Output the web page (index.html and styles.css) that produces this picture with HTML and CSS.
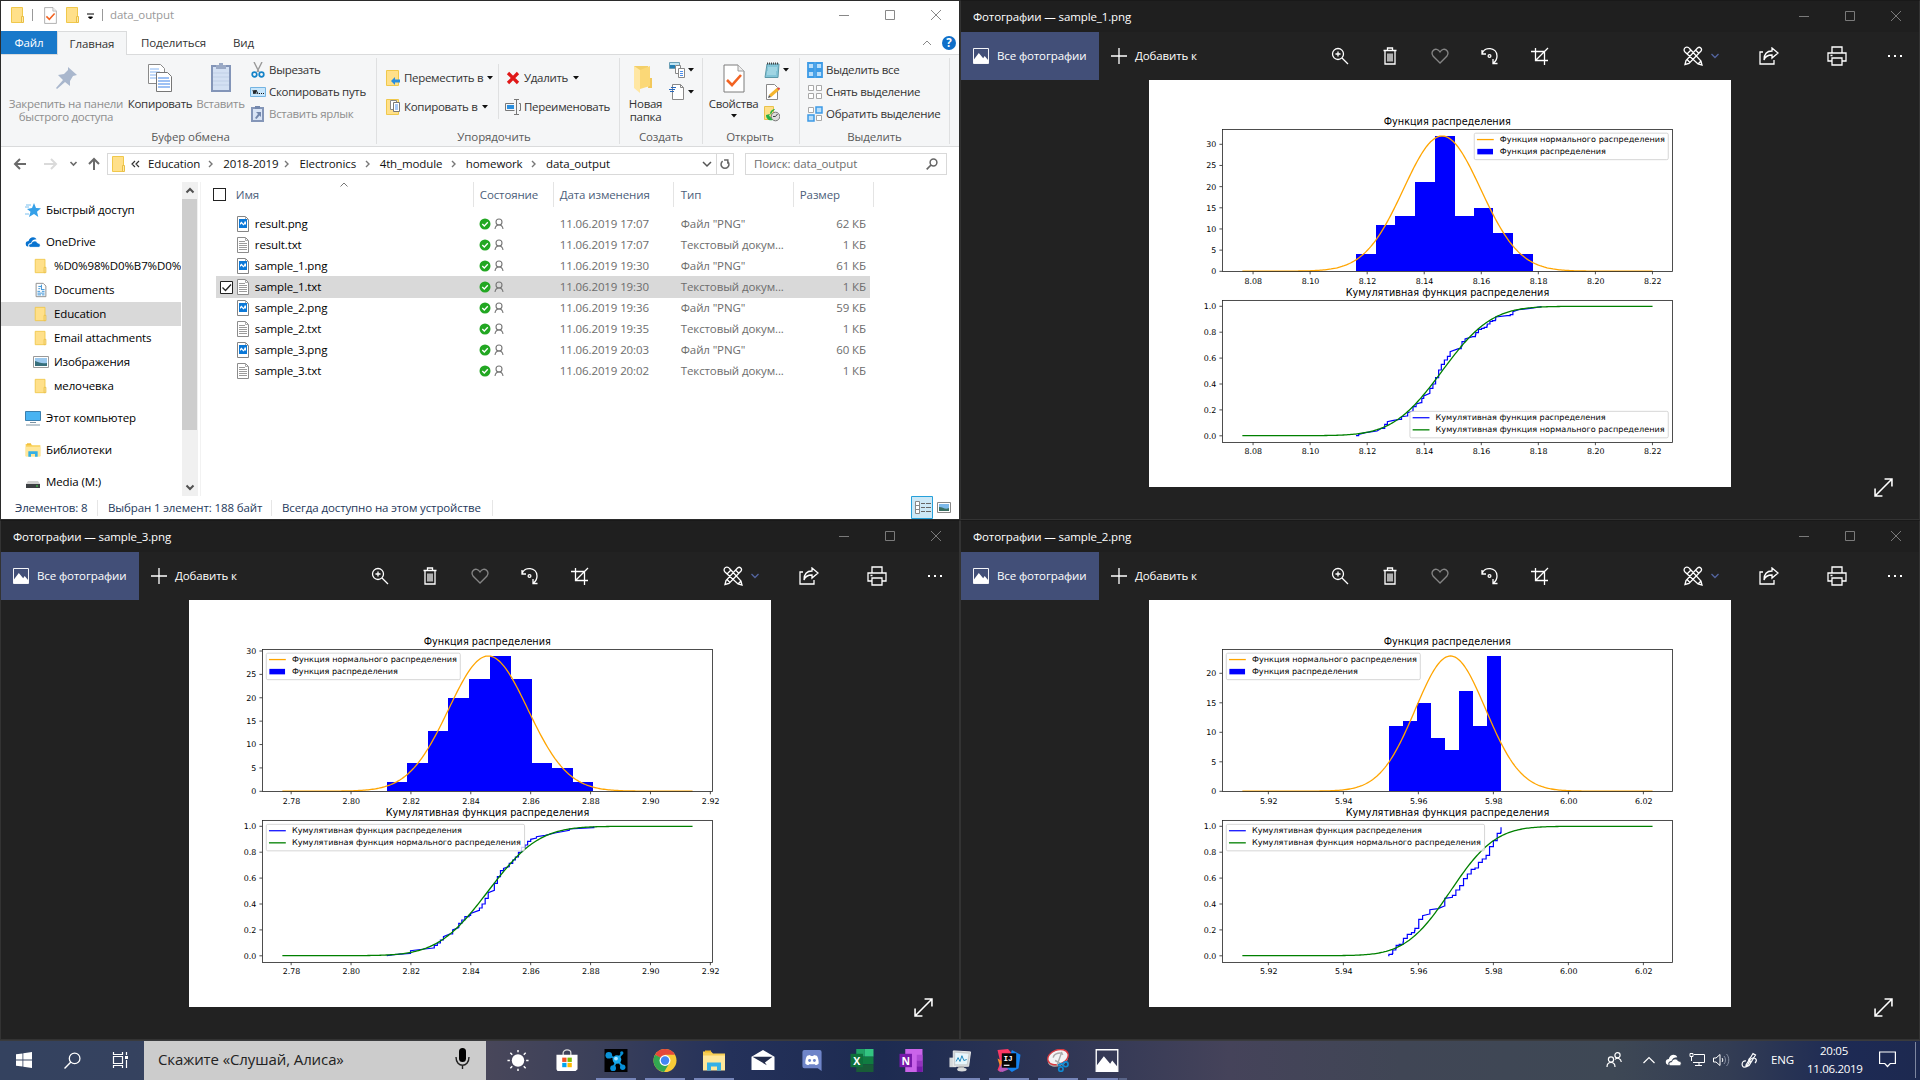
FILE: index.html
```html
<!DOCTYPE html>
<html lang="ru">
<head>
<meta charset="utf-8">
<title>data_output</title>
<link rel="stylesheet" href="styles.css">
</head>
<body>
<svg class="sprite" aria-hidden="true">
  <symbol id="folder" viewBox="0 0 16 18"><path d="M1.5 1.5h11v15h-11z" fill="#ffe08a" stroke="#f0c84b"/><path d="M11.5 10.5h2v6h-2z" fill="#ffe9a6" stroke="#e9bf45"/></symbol>
  <symbol id="png" viewBox="0 0 14 18"><path d="M1.500 1.500h8l3 3v12h-11z" fill="#fff" stroke="#858585"/><path d="M9.500 1.500v3h3" fill="none" stroke="#aaa"/><path d="M3 4h8v9H3z" fill="#0b78d7"/><path d="M4 10V8l1.500-1.500L7.500 9 9 6l1 1v3L9 9l-1.500 1.500L5.500 8.500z" fill="#fff"/></symbol>
  <symbol id="txt" viewBox="0 0 14 18"><path d="M1.500 1.500h8l3 3v12h-11z" fill="#fff" stroke="#8c8c8c"/><path d="M9.500 1.500v3h3" fill="none" stroke="#aaa"/><path d="M3 5.500h6M3 7.500h8M3 9.500h8M3 11.500h8M3 13.500h8" stroke="#9b9b9b"/></symbol>
  <symbol id="doc" viewBox="0 0 14 18"><path d="M1.500 1.500h8l3 3v12h-11z" fill="#fff" stroke="#858585"/><path d="M4 7.500h2M4 5h3M7.500 3v5M7 8.500h4M3 10.500h3M3 12.500h8M3 14.500h4M8 10.500h3M8 14.500h3" stroke="#2a8ad4"/></symbol>
  <symbol id="check-doc" viewBox="0 0 22 29"><path d="M1 1h14l6 6v21H1z" fill="#fff" stroke="#7d7d7d"/><path d="M15 1v6h6" fill="#eee" stroke="#999"/><path d="M4 16l5 5 9-10" fill="none" stroke="#f26322" stroke-width="2.600"/></symbol>
  <symbol id="sync" viewBox="0 0 12 12"><circle cx="6" cy="6" r="5.500" fill="#22a722"/><path d="M3.300 6l2 2 3.500-3.700" stroke="#fff" fill="none" stroke-width="1.300"/></symbol>
  <symbol id="person" viewBox="0 0 10 12"><circle cx="5" cy="4" r="3" fill="none" stroke="#777" stroke-width="1.100"/><path d="M1 11c.3-2.500 1.500-4 4-4s3.700 1.500 4 4" fill="none" stroke="#777" stroke-width="1.100"/></symbol>
  <symbol id="caret" viewBox="0 0 6 4"><path d="M0 0h6L3 3.500z" fill="#111"/></symbol>
  <symbol id="crumb" viewBox="0 0 6 8"><path d="M1 1l3 3-3 3" fill="none" stroke="#777" stroke-width="1.400"/></symbol>
  <symbol id="min" viewBox="0 0 10 10"><path d="M0 5.500h10" stroke="currentColor"/></symbol>
  <symbol id="max" viewBox="0 0 10 10"><path d="M.5.500h9v9h-9z" fill="none" stroke="currentColor"/></symbol>
  <symbol id="close" viewBox="0 0 10 10"><path d="M0 0l10 10M10 0L0 10" stroke="currentColor"/></symbol>
  <symbol id="mountain" viewBox="0 0 22 22"><path d="M.7.700h20.600v20.600H.7z" fill="none" stroke="#fff" stroke-width="1.300"/><path d="M1 16l7-9 6 7 2-3 5 6v4H1z" fill="#fff"/></symbol>
  <symbol id="explorer" viewBox="0 0 24 22"><path d="M1 2h8l2 2h12v16H1z" fill="#f8cf57"/><path d="M1 6h22v15H1z" fill="#ffe79a"/><path d="M3 1h6v2H3z" fill="#f0b92a"/><path d="M5 13h14v8h-4v-4H9v4H5z" fill="#35b0e6"/></symbol>
  <symbol id="cloud" viewBox="0 0 18 12"><path d="M1 9c-1-3 2-4 3-4 1-5 7-6 9-2-3 0-5 1-6 4-3 0-4 2-3 4H3c-1 0-2-1-2-2z" fill="currentColor"/><path d="M6 12c-3-1-2-4 1-4 1-4 6-4 7-1 4 0 4 5 1 5z" fill="currentColor" stroke="var(--cut)" stroke-width=".8"/></symbol>
</svg>

<main class="desktop">
  <section class="explorer">
    <header class="ex-title">
      <svg class="i-folder"><use href="#folder"/></svg><i class="bar"></i>
      <svg class="i-qdoc"><use href="#check-doc"/></svg>
      <svg class="i-folder"><use href="#folder"/></svg>
      <svg class="i-qcaret" viewBox="0 0 8 8"><path d="M0 1h7M1.500 4h4L3.500 6z" stroke="#000" fill="#000"/></svg><i class="bar"></i>
      <span class="ex-name">data_output</span>
      <div class="controls"><svg><use href="#min"/></svg><svg><use href="#max"/></svg><svg><use href="#close"/></svg></div>
    </header>
    <nav class="tabs">
      <span class="tab tab-file">Файл</span><span class="tab tab-home">Главная</span><span class="tab tab-share">Поделиться</span><span class="tab tab-view">Вид</span>
      <svg class="i-collapse" viewBox="0 0 10 6"><path d="M1 5l4-4 4 4" fill="none" stroke="#888"/></svg>
      <span class="help">?</span>
    </nav>
    <div class="ribbon">
      <div class="group g-clip">
        <div class="tools">
          <div class="big big-pin off"><svg viewBox="0 0 32 32"><path d="M18 5l9 8-4 1-3 5 0 5-5-4-8 7-1-1 7-8-5-5 6-1 4-4z" fill="#a9b7cd"/></svg><span>Закрепить на панели<br>быстрого доступа</span></div>
          <div class="big big-copy"><svg viewBox="0 0 32 32"><path d="M4.500 2.500h12l4 4v15h-16z" fill="#fff" stroke="#8a8a8a"/><path d="M6 7h9M6 10h10M6 13h8M6 16h8" stroke="#85b4f2"/><path d="M12.500 10.500h11l4 4v15h-15z" fill="#fff" stroke="#777"/><path d="M14 16h11M14 19h12M14 22h12M14 25h12" stroke="#3f83ea" stroke-width="1.200"/></svg><span>Копировать</span></div>
          <div class="big big-paste off"><svg viewBox="0 0 32 32"><path d="M7 4h18v25H7z" fill="#d3e0f3" stroke="#8395b8" stroke-width="2"/><path d="M11 3h3V1h4v2h3v4H11z" fill="#9aa9c5"/><path d="M8 11h16M8 15h16M8 19h16M8 23h16" stroke="#c0cfe6"/></svg><span>Вставить</span></div>
          <div class="small-col">
            <div class="small"><svg viewBox="0 0 16 16"><path d="M4 0l5 10M12 0L7 10" stroke="#999" stroke-width="1.400"/><circle cx="4.500" cy="12.500" r="2.300" fill="none" stroke="#1583c8" stroke-width="1.700"/><circle cx="11.500" cy="12.500" r="2.300" fill="none" stroke="#1583c8" stroke-width="1.700"/></svg>Вырезать</div>
            <div class="small"><svg viewBox="0 0 16 16"><path d="M.5 3.500h15v9H.5z" fill="#c8e6fb" stroke="#74b4e2"/><path d="M3 6l1 4 1-4 1 4M6 6l2 4M9 9.500h1M11 9.500h1M13 9.500h1" stroke="#111" fill="none"/></svg>Скопировать путь</div>
            <div class="small off"><svg viewBox="0 0 16 16"><path d="M2 2h11v13H2z" fill="#d9e4f5" stroke="#8496b8" stroke-width="2"/><path d="M5 0h5v3H5zM6 6h5v5L9.500 9.500 6.500 13 5 12l3-4z" fill="#7488ad"/></svg>Вставить ярлык</div>
          </div>
        </div><div class="g-label">Буфер обмена</div>
      </div>
      <div class="group g-org">
        <div class="tools">
          <div class="mid-col mid-first">
            <div class="small"><svg viewBox="0 0 16 16"><path d="M.5.500h12v15H.5z" fill="#ffe08a" stroke="#f0c84b"/><path d="M5 11l4-4v2.500h5v3H9V15z" fill="#2b8fdf"/></svg>Переместить в<svg class="caret"><use href="#caret"/></svg></div>
            <div class="small"><svg viewBox="0 0 16 16"><path d="M.5.500h12v15H.5z" fill="#ffe08a" stroke="#f0c84b"/><path d="M4.500 1.500h6v9h-6z" fill="#fff" stroke="#888"/><path d="M7.500 3.500h6v9h-6z" fill="#fff" stroke="#777"/><path d="M9 6h3M9 8h3M9 10h3" stroke="#4d8eea"/></svg>Копировать в<svg class="caret"><use href="#caret"/></svg></div>
          </div>
          <div class="mid-col mid-second">
            <div class="small"><svg viewBox="0 0 16 16"><path d="M3 3l10 10M13 3L3 13" stroke="#e01818" stroke-width="3.200"/></svg>Удалить<svg class="caret"><use href="#caret"/></svg></div>
            <div class="small"><svg viewBox="0 0 16 16"><path d="M9 4.500H.5v7h9M14 4.500h1.500v7H14M9 .500h5M11.500.500v15M9 15.500h5" stroke="#777" fill="none"/><path d="M2 6h7v4H2z" fill="#2b8fdf"/></svg>Переименовать</div>
          </div>
        </div><div class="g-label">Упорядочить</div>
      </div>
      <div class="group g-new">
        <div class="tools">
          <div class="big big-new"><svg viewBox="2 0 32 32"><path d="M6 4h14v20H6z" fill="#f3cf68"/><path d="M21 16h3v10h-4z" fill="#f2c85c"/><path d="M6 4l6 4v23l-6-5z" fill="#ffe7a3"/><path d="M12 8l10-4v20l-10 3z" fill="#fbd877"/></svg><span>Новая<br>папка</span></div>
          <div class="small-col">
            <div class="small"><svg viewBox="0 0 16 16"><path d="M.5.500h10v6H.5z" fill="#bfe6f5" stroke="#6c9fb5"/><path d="M1 3h5v3H1z" fill="#237fb3"/><path d="M6.500 3.500h5v8h-5z" fill="#fff" stroke="#888"/><path d="M9.500 6.500h6v9h-6z" fill="#fff" stroke="#888"/><path d="M11 9.500h3M11 11.500h3M11 13.500h3" stroke="#4d8eea"/></svg><svg class="caret"><use href="#caret"/></svg></div>
            <div class="small"><svg viewBox="0 0 16 16"><path d="M3.500.500h8l3 3v12h-11z" fill="#fff" stroke="#888"/><path d="M11.500.500v3h3" fill="none" stroke="#888"/><path d="M2 3.500h5M0 5.500h6M1 7.500h4" stroke="#2969bd"/></svg><svg class="caret"><use href="#caret"/></svg></div>
          </div>
        </div><div class="g-label">Создать</div>
      </div>
      <div class="group g-open">
        <div class="tools">
          <div class="big big-prop"><svg viewBox="-5 -2 32 32"><use href="#check-doc" width="22" height="29"/></svg><span>Свойства</span><svg class="caret"><use href="#caret"/></svg></div>
          <div class="small-col">
            <div class="small"><svg viewBox="0 0 16 16"><path d="M3 2h12l-1 13.500H1z" fill="#83c5d8" stroke="#5d98a8"/><path d="M3 1.500h12" stroke="#444" stroke-width="2" stroke-dasharray="1 1"/><path d="M4 6h9M4 8h9M3 10h9M3 12h9" stroke="#bde5ee"/></svg><svg class="caret"><use href="#caret"/></svg></div>
            <div class="small"><svg viewBox="0 0 16 16"><path d="M2.500.500h8l3 3v12h-11z" fill="#fff" stroke="#888"/><path d="M6 12l8-7" stroke="#f4b52e" stroke-width="3"/><path d="M14 4l1.500 1.500" stroke="#d44" stroke-width="2"/><path d="M5 11l2 2-3 1z" fill="#555"/></svg></div>
            <div class="small"><svg viewBox="0 0 16 16"><path d="M.5.500h9v13h-9z" fill="#ffe08a" stroke="#e9c24b"/><circle cx="11.500" cy="10.500" r="4.300" fill="#ddd" stroke="#777"/><path d="M11.500 10.500l2-2.500M11.500 10.500H9" stroke="#444"/><path d="M2 9l4-1-1 2c2 0 2 3 4 4-4 1-7-1-7-5zM6 7c1-3 3-4 5-4-1 2-3 2-4 6z" fill="#27b044"/></svg></div>
          </div>
        </div><div class="g-label">Открыть</div>
      </div>
      <div class="group g-sel">
        <div class="small-col">
          <div class="small"><svg viewBox="0 0 16 16"><path d="M1 1h6v6H1zM9 1h6v6H9zM1 9h6v6H1zM9 9h6v6H9z" fill="#b9defa" stroke="#3d9be6" stroke-width="1.800"/></svg>Выделить все</div>
          <div class="small"><svg viewBox="0 0 16 16"><path d="M1.500 1.500h5v5h-5zM9.500 1.500h5v5h-5zM1.500 9.500h5v5h-5zM9.500 9.500h5v5h-5z" fill="#fff" stroke="#a8a8a8"/></svg>Снять выделение</div>
          <div class="small"><svg viewBox="0 0 16 16"><path d="M1.500 1.500h5v5h-5zM9.500 9.500h5v5h-5z" fill="#fff" stroke="#a8a8a8"/><path d="M9 1h6v6H9zM1 9h6v6H1z" fill="#b9defa" stroke="#3d9be6" stroke-width="1.500"/></svg>Обратить выделение</div>
        </div><div class="g-label">Выделить</div>
      </div>
    </div>
    <div class="address-row">
      <svg class="arrows" viewBox="0 0 106 22"><g fill="none" stroke="#6a6a6a" stroke-width="2"><path d="M25 11H14M19 6l-5 5 5 5"/><path d="M43 11h11M50 6l5 5-5 5" stroke="#dadada"/><path d="M69.500 9l3 3 3-3" stroke-width="1.600"/><path d="M93 17V6M88 11l5-5 5 5"/></g></svg>
      <div class="address">
        <svg class="i-folder"><use href="#folder"/></svg><svg class="guill" viewBox="0 0 9 8"><path d="M4 1L1 4l3 3M8 1L5 4l3 3" fill="none" stroke="#333" stroke-width="1.200"/></svg>
        <span class="crumb c1">Education</span><svg class="sep"><use href="#crumb"/></svg>
        <span class="crumb c2">2018-2019</span><svg class="sep"><use href="#crumb"/></svg>
        <span class="crumb c3">Electronics</span><svg class="sep"><use href="#crumb"/></svg>
        <span class="crumb c4">4th_module</span><svg class="sep"><use href="#crumb"/></svg>
        <span class="crumb c5">homework</span><svg class="sep"><use href="#crumb"/></svg>
        <span class="crumb c6">data_output</span>
        <svg class="drop" viewBox="0 0 10 8"><path d="M1 2l4 4 4-4" fill="none" stroke="#555" stroke-width="1.500"/></svg>
        <svg class="refresh" viewBox="0 0 17 20"><path d="M11 7a4.200 4.200 0 1 1-5 0M7.500 5.700h4v4" fill="none" stroke="#666" stroke-width="1.600"/></svg>
      </div>
      <div class="search">Поиск: data_output<svg viewBox="0 0 12 12"><circle cx="7.500" cy="4.500" r="3.400" fill="none" stroke="#666" stroke-width="1.500"/><path d="M5 7l-4.300 4.300" stroke="#666" stroke-width="1.700"/></svg></div>
    </div>
    <div class="ex-body">
      <aside class="tree">
        <div class="node"><svg viewBox="0 0 16 16"><path d="M9 1l2 5 5 .3-4 3.400 1.300 5.300L9 12l-5 3 1.500-5.300L2 7l5-1z" fill="#35a0e8"/><path d="M0 5h4M1 3h5M0 12h4" stroke="#7ac0ef"/></svg>Быстрый доступ</div>
        <div class="node top blue"><svg viewBox="0 -3 18 18"><use href="#cloud" width="18" height="12"/></svg>OneDrive</div>
        <div class="node sub"><svg><use href="#folder"/></svg>%D0%98%D0%B7%D0%</div>
        <div class="node sub"><svg><use href="#doc"/></svg>Documents</div>
        <div class="node sub picked"><svg><use href="#folder"/></svg>Education</div>
        <div class="node sub"><svg><use href="#folder"/></svg>Email attachments</div>
        <div class="node sub"><svg viewBox="0 0 16 16"><path d="M.5 2.500h15v11H.5z" fill="#fff" stroke="#999"/><path d="M2 4h12v8H2z" fill="#9cc9ee"/><path d="M2 7c4 1 6 3 12 2v3H2z" fill="#376f7b"/></svg>Изображения</div>
        <div class="node sub"><svg><use href="#folder"/></svg>мелочевка</div>
        <div class="node top"><svg viewBox="0 0 16 16"><path d="M.5 1.500h15v9H.5z" fill="#49b3f2" stroke="#3b7fae"/><path d="M5 12.500h6M1 15h14" stroke="#7d93a3"/></svg>Этот компьютер</div>
        <div class="node top"><svg><use href="#explorer"/></svg>Библиотеки</div>
        <div class="node top"><svg viewBox="0 0 16 16"><path d="M3 7h10l2 3H1z" fill="#d0d0d0"/><path d="M1 10h14v4H1z" fill="#3c3f42"/><path d="M11 12h2" stroke="#3fdc4b"/></svg>Media (M:)</div>
      </aside>
      <div class="scroll"><svg viewBox="0 0 16 17"><path d="M4.500 10.500L8 7l3.500 3.500" fill="none" stroke="#505050" stroke-width="2"/></svg><i></i><svg viewBox="0 0 16 17"><path d="M4.500 6.500L8 10l3.500-3.500" fill="none" stroke="#505050" stroke-width="2"/></svg></div>
      <div class="files">
        <div class="head"><i class="box"></i><span class="h-name">Имя</span><svg class="sort" viewBox="0 0 8 5"><path d="M.5 4.500L4 1l3.500 3.500" fill="none" stroke="#777"/></svg><span class="h-state">Состояние</span><span class="h-date">Дата изменения</span><span class="h-type">Тип</span><span class="h-size">Размер</span></div>
        <div class="row"><svg class="fi"><use href="#png"/></svg><span class="name">result.png</span><svg class="st"><use href="#sync"/></svg><svg class="pr"><use href="#person"/></svg><span class="date">11.06.2019 17:07</span><span class="type">Файл "PNG"</span><span class="size">62 КБ</span></div>
        <div class="row"><svg class="fi"><use href="#txt"/></svg><span class="name">result.txt</span><svg class="st"><use href="#sync"/></svg><svg class="pr"><use href="#person"/></svg><span class="date">11.06.2019 17:07</span><span class="type">Текстовый докум...</span><span class="size">1 КБ</span></div>
        <div class="row"><svg class="fi"><use href="#png"/></svg><span class="name">sample_1.png</span><svg class="st"><use href="#sync"/></svg><svg class="pr"><use href="#person"/></svg><span class="date">11.06.2019 19:30</span><span class="type">Файл "PNG"</span><span class="size">61 КБ</span></div>
        <div class="row chosen"><svg class="tick" viewBox="0 0 13 13"><path d="M.5.500h12v12H.5z" fill="#fff" stroke="#222"/><path d="M2.500 6.500l3 3 5.500-6" fill="none" stroke="#222" stroke-width="1.300"/></svg><svg class="fi"><use href="#txt"/></svg><span class="name">sample_1.txt</span><svg class="st"><use href="#sync"/></svg><svg class="pr"><use href="#person"/></svg><span class="date">11.06.2019 19:30</span><span class="type">Текстовый докум...</span><span class="size">1 КБ</span></div>
        <div class="row"><svg class="fi"><use href="#png"/></svg><span class="name">sample_2.png</span><svg class="st"><use href="#sync"/></svg><svg class="pr"><use href="#person"/></svg><span class="date">11.06.2019 19:36</span><span class="type">Файл "PNG"</span><span class="size">59 КБ</span></div>
        <div class="row"><svg class="fi"><use href="#txt"/></svg><span class="name">sample_2.txt</span><svg class="st"><use href="#sync"/></svg><svg class="pr"><use href="#person"/></svg><span class="date">11.06.2019 19:35</span><span class="type">Текстовый докум...</span><span class="size">1 КБ</span></div>
        <div class="row"><svg class="fi"><use href="#png"/></svg><span class="name">sample_3.png</span><svg class="st"><use href="#sync"/></svg><svg class="pr"><use href="#person"/></svg><span class="date">11.06.2019 20:03</span><span class="type">Файл "PNG"</span><span class="size">60 КБ</span></div>
        <div class="row"><svg class="fi"><use href="#txt"/></svg><span class="name">sample_3.txt</span><svg class="st"><use href="#sync"/></svg><svg class="pr"><use href="#person"/></svg><span class="date">11.06.2019 20:02</span><span class="type">Текстовый докум...</span><span class="size">1 КБ</span></div>
      </div>
    </div>
    <footer class="status">
      <span class="s1">Элементов: 8</span><span class="s2">Выбран 1 элемент: 188 байт</span><span class="s3">Всегда доступно на этом устройстве</span>
      <svg class="view-details" viewBox="0 0 22 23"><path d="M.5.500h21v22H.5z" fill="#cce8f6" stroke="#26a0da"/><path d="M4.500 5.500h4v12h-4zM4.500 9.500h4M4.500 13.500h4" fill="#fff" stroke="#888"/><path d="M10 7.500h4M15 7.500h5M10 11.500h4M15 11.500h5M10 15.500h4M15 15.500h5" stroke="#666"/></svg>
      <svg class="view-icons" viewBox="0 0 14 11"><path d="M.5.500h13v10H.5z" fill="#fff" stroke="#888"/><path d="M2 2h10v7H2z" fill="#7db9ea"/><path d="M2 5c4 0 6 3 10 1v3H2z" fill="#3a6f62"/></svg>
    </footer>
  </section>
  <section class="photos" data-sample="sample_1"></section>
  <section class="photos" data-sample="sample_3"></section>
  <section class="photos" data-sample="sample_2"></section>

  <footer class="taskbar">
    <div class="sys"><svg viewBox="0 0 16 16" width="16" height="16"><path d="M0 2.300l6.500-.9v6.200H0zM7.300 1.300L16 0v7.600H7.300zM0 8.400h6.500v6.200L0 13.700zM7.300 8.400H16V16l-8.700-1.300z" fill="#fff"/></svg></div>
    <div class="sys"><svg viewBox="0 0 16 16" width="17" height="17"><circle cx="10" cy="6" r="5" fill="none" stroke="#fff" stroke-width="1.200"/><path d="M6.500 9.500L.5 15.500" stroke="#fff" stroke-width="1.300"/></svg></div>
    <div class="sys"><svg viewBox="0 0 17 16" width="17" height="16"><path d="M1.500 4.500h9v7h-9zM1.500 0v2.500h9V0M1.500 16v-2.500h9V16M14.500 0v3M14.500 8v8" fill="none" stroke="#fff" stroke-width="1.200"/><path d="M13 4h3v3h-3z" fill="#fff"/></svg></div>
    <div class="alice">Скажите «Слушай, Алиса»<svg viewBox="0 0 15 22"><rect x="4" y="0" width="7" height="14" rx="3.500"/><path d="M1 9c0 11 13 11 13 0M7.500 17v4" fill="none" stroke="#222" stroke-width="1.400"/></svg></div>
    <div class="apps">
      <div class="app"><svg viewBox="0 0 24 24"><circle cx="12" cy="12" r="6.500" fill="#fff"/><path d="M12 1v2.500M12 20.500V23M1 12h2.500M20.500 12H23M4 4l2 2M18 18l2 2M4 20l2-2M18 6l2-2" stroke="#fff" stroke-width="1.500"/></svg></div>
      <div class="app"><svg viewBox="0 0 24 24"><path d="M8 7V4c0-4 8-4 8 0v3" fill="none" stroke="#ddd" stroke-width="1.300"/><path d="M1 6h22v15l-2 2H2l-1-2z" fill="#fff"/><path d="M7 9h4.500v4.500H7z" fill="#f25022"/><path d="M12.500 9H17v4.500h-4.500z" fill="#7fba00"/><path d="M7 14.500h4.500V19H7z" fill="#00a4ef"/><path d="M12.500 14.500H17V19h-4.500z" fill="#ffb900"/></svg></div>
      <div class="app run"><svg viewBox="0 0 24 24"><path d="M0 0h24v24H0z" fill="#000"/><path d="M5 7l8 4 6-7M13 11l7 9M13 11l-4 9" stroke="#0a94d8" stroke-width="2" fill="none"/><circle cx="13" cy="11" r="4.500" fill="#19a9ec"/><circle cx="4.500" cy="6.500" r="3.500" fill="#0b91d8"/><circle cx="9" cy="20" r="3" fill="#078fd7"/><circle cx="19" cy="19" r="2.800" fill="#078fd7"/><circle cx="18" cy="4" r="1.700" fill="#078fd7"/><circle cx="12" cy="10" r="2" fill="#aee5ff"/></svg></div>
      <div class="app run"><svg viewBox="0 0 24 24"><circle cx="12" cy="12" r="12" fill="#f7cb37"/><path d="M12 12L1.600 6A12 12 0 0 1 22.400 6H12z" fill="#e5483b"/><path d="M1.600 6A12 12 0 0 0 11 24l6-10z" fill="#32a851"/><circle cx="12" cy="12" r="5.700" fill="#fff"/><circle cx="12" cy="12" r="4.400" fill="#4285f4"/></svg></div>
      <div class="app run"><svg><use href="#explorer"/></svg></div>
      <div class="app"><svg viewBox="0 0 24 24"><path d="M0 8l12-7 12 7v14H0z" fill="#fff"/><path d="M1 8h21l-8 6 2 3z" fill="#232d4c"/></svg></div>
      <div class="app"><svg viewBox="0 0 24 24"><path d="M4 1h16q2 0 2 2v20l-4-3H4q-2 0-2-2V3q0-2 2-2z" fill="#6f85c9"/><path d="M5 15c0-4 1-7 2-8l3-.7.7 1h2.600l.7-1 3 .7c1 1 2 4 2 8-2 2-4 2-4 1H9c0 1-2 1-4-1z" fill="#fff"/><circle cx="9.500" cy="12" r="1.500" fill="#6f85c9"/><circle cx="14.500" cy="12" r="1.500" fill="#6f85c9"/></svg></div>
      <div class="app"><svg viewBox="0 0 24 24"><path d="M6 0h9v8H6z" fill="#21a366"/><path d="M15 0h9v8h-9z" fill="#33c481"/><path d="M6 8h18v8H6z" fill="#107c41"/><path d="M6 16h18v8H6z" fill="#185c37"/><path d="M0 5h13v14H0z" fill="#0e703c"/><text x="6.500" y="16.500" class="logo-letter">X</text></svg></div>
      <div class="app"><svg viewBox="0 0 24 24"><path d="M6 0h18v24H6z" fill="#ca64ea"/><path d="M18 6h6v6h-6z" fill="#ae4bd5"/><path d="M18 12h6v6h-6z" fill="#9332bf"/><path d="M18 18h6v6h-6z" fill="#7719aa"/><path d="M0 5h13v14H0z" fill="#7719aa"/><text x="6.500" y="16.500" class="logo-letter">N</text></svg></div>
      <div class="app run"><svg viewBox="0 0 24 24"><path d="M1 9h7v10H1z" fill="#d4d7d8"/><path d="M5 2l18 1-2 15H5z" fill="#c9ced0" stroke="#eee"/><path d="M7 4l14 1-2 11H7z" fill="#e8f6fc"/><path d="M8 13l2-4 2 4 2-6 2 5 3-1" stroke="#1785bd" fill="none"/><path d="M11 18h5l1 3H9z" fill="#aaa"/><ellipse cx="14" cy="21.500" rx="5" ry="2" fill="#d7d9da"/></svg></div>
      <div class="app run"><svg viewBox="0 0 24 24"><path d="M0 1l11-1 5 6-5 9-8 9-3-2 3-8z" fill="#fc3764"/><path d="M0 10l6 3-3 6z" fill="#fa8b2b"/><path d="M1 23l4-9 7 7-7 3z" fill="#b45abb"/><path d="M15 1l9 5-2 14-7 4-6-5z" fill="#1483f0"/><path d="M4.500 4.500h15v15h-15z" fill="#070707"/><path d="M6.500 17h6" stroke="#fff" stroke-width="1.200"/><text x="11" y="13" class="ij">IJ</text></svg></div>
      <div class="app run"><svg viewBox="0 0 24 24"><ellipse cx="12" cy="11" rx="11" ry="7" transform="rotate(-20 12 11)" fill="#aaa"/><ellipse cx="12" cy="8.500" rx="11" ry="7.500" transform="rotate(-20 12 8.500)" fill="#f3f4f5" stroke="#d83b42" stroke-width="1.500"/><path d="M7 9c1-5 9-6 10-3M16 3l-5 14M9 12l9 5" stroke="#aaa" fill="none" stroke-width="1.500"/><path d="M12 17c3-1 2-3 6-1" stroke="#118ad1" stroke-width="2" fill="none"/><circle cx="20" cy="16" r="2.500" fill="none" stroke="#118ad1" stroke-width="1.700"/><circle cx="15" cy="21" r="2.300" fill="none" stroke="#118ad1" stroke-width="1.700"/></svg></div>
      <div class="app run stacked"><svg><use href="#mountain"/></svg></div>
    </div>
    <div class="tray">
      <svg class="t-people" viewBox="0 0 16 16"><g fill="none" stroke="#fff" stroke-width="1.200"><circle cx="5" cy="7.500" r="2.600"/><path d="M1 15c0-6 8-6 8 0"/><circle cx="11.500" cy="3.200" r="2.600"/><path d="M9 7.500c2-2.500 6-1 6.300 2.500"/></g></svg>
      <svg class="t-up" viewBox="0 0 12 8"><path d="M.5 7L6 1.500 11.500 7" fill="none" stroke="#fff" stroke-width="1.200"/></svg>
      <svg class="t-cloud"><use href="#cloud"/></svg>
      <svg class="t-net" viewBox="0 0 16 14"><path d="M5 1.500h10.500v8H4M10 9.500v3M6 12.500h7M1 .500h3v3H1zM2.500 3.500V8" fill="none" stroke="#fff"/></svg>
      <svg class="t-vol" viewBox="0 0 17 14"><path d="M.5 5h2.500L7 1.500v11L3 9H.5z" fill="none" stroke="#fff"/><path d="M9 5c1 1 1 3 0 4" stroke="#fff" fill="none"/><path d="M11 3c2 2 2 6 0 8M13.500 1c3 3 3 9 0 12" stroke="#8890a3" fill="none"/></svg>
      <svg class="t-pen" viewBox="0 0 16 16"><path d="M5 13L12 1.500l2.500 1.500L8 13.500l-3 1.300zM5 9c-5-1-5 7-1 6 4 0 4-9 8-9 4 0 4 3 2 5M9 6c-3 3 0 5 2 3" fill="none" stroke="#fff" stroke-width="1.200"/></svg>
      <span class="lang">ENG</span>
      <span class="clock">20:05<br>11.06.2019</span>
      <svg class="t-note" viewBox="0 0 17 17"><path d="M.6 1h15.800v11.500h-5.200L8.500 15.500 5.800 12.500H.6z" fill="none" stroke="#fff" stroke-width="1.200"/></svg>
      <i class="peek"></i>
    </div>
  </footer>
</main>

<template id="photos-window">
  <header class="ph-title"><span></span><div class="controls"><svg><use href="#min"/></svg><svg><use href="#max"/></svg><svg><use href="#close"/></svg></div></header>
  <div class="ph-bar">
    <div class="all"><svg><use href="#mountain"/></svg>Все фотографии</div>
    <div class="add"><svg viewBox="0 0 16 16"><path d="M8 0v16M0 8h16" stroke="#fff" stroke-width="1.300"/></svg>Добавить к</div>
    <div class="edit-tools">
      <svg viewBox="0 0 18 18"><circle cx="7" cy="7" r="5.500"/><path d="M11 11l6 6M7 4.500v5M4.500 7h5"/></svg>
      <svg viewBox="0 0 18 18"><path d="M2.500 3.500h13M6.500 3V1h5v2M4 3.500V17h10V3.500M7 6.500v8M9 6.500v8M11 6.500v8"/></svg>
      <svg class="dim" viewBox="0 0 18 18"><path d="M9 16L2 9C-1 4 5-1 9 5c4-6 10-1 7 4z"/></svg>
      <svg viewBox="0 0 18 18"><path d="M1 7C3-1 16 0 16 9c0 3-1 5-3.500 7M1 3v4h4M12 12v4.500h4.500"/><circle cx="8.500" cy="9" r="1.400"/></svg>
      <svg viewBox="0 0 18 18"><path d="M0 4.500h13.500V18M4.500 1v12.500H17M4.500 13.500L17 1"/></svg>
    </div>
    <div class="right-tools">
      <svg class="r-edit" viewBox="0 0 20 20"><path d="M1.500 2.500c1-2 4-1.500 5 0L18 15l1 4-4-1L2 6c-1-1-1-2.500-.5-3.500zM2 18.500l1-4L14.500 2c2.500-2 5 1 3.500 3L6 17.500zM4 8l3.500-3.500M4 13.500l3 3M12.500 4l3.500 3.500M15 18l3-3"/></svg>
      <svg class="r-down" viewBox="0 0 8 6"><path d="M.5 1L4 4.500 7.500 1"/></svg>
      <svg class="r-share" viewBox="0 0 20 18"><path d="M4 5H1v12h14v-4M13 1l6 5-6 5V8c-5 0-7 2-8 5 0-6 3-9 8-9z"/></svg>
      <svg class="r-print" viewBox="0 0 20 20"><path d="M5 7V1h10v6M5 15H1V7h18v8h-4M5 12h10v7H5zM3.500 9.500h2"/></svg>
      <svg class="r-more" viewBox="0 0 16 4"><path d="M1 2h2M7 2h2M13 2h2"/></svg>
    </div>
  </div>
  <div class="stage"><svg class="plot" viewBox="0 0 582 407"></svg><svg class="expand" viewBox="0 0 18 18"><path d="M1 17L17 1M10 1h7v7M1 10v7h7" fill="none" stroke="#fff" stroke-width="1.500"/></svg></div>
</template>
<script src="charts.js"></script>
</body>
</html>
```
FILE: styles.css
```css
* { box-sizing: border-box; }
body { margin: 0; width: 1920px; height: 1080px; overflow: hidden; font: 11.5px/16px "Open Sans", "Noto Sans", sans-serif; letter-spacing: -.12px; color: #1b1b1b; white-space: nowrap; background: #202020; }
svg { display: block; flex: none; }
.sprite { display: none; }
.desktop { display: grid; grid-template: 520px 520px 40px / 960px 960px; }
.controls { display: flex; gap: 36px; margin-left: auto; }
.controls svg { width: 10px; height: 10px; }

.explorer { display: flex; flex-direction: column; background: #fff; border: 1px solid #2b2b2b; overflow: hidden; }
.ex-title { display: flex; align-items: center; height: 30px; padding: 0 18px 2px 9px; color: #999; }
.i-folder { width: 16px; height: 18px; }
.bar { width: 1px; height: 12px; background: #999; margin: 0 11px 0 6px; }
.i-qdoc { width: 13px; height: 17px; margin-right: 8px; }
.i-qcaret { width: 8px; height: 8px; margin: 4px 0 0 6px; }
.i-qcaret + .bar { margin: 0 7px; }
.ex-title .controls { color: #888; }
.tabs { display: flex; height: 24px; border-bottom: 1px solid #dadbdc; align-items: center; }
.tab { height: 24px; line-height: 23px; text-align: center; color: #333; }
.tab-file { width: 56px; height: 23px; background: #1979ca; color: #fff; margin-bottom: 1px; }
.tab-home { width: 70px; background: #f5f6f7; border: 1px solid #dadbdc; border-bottom: 0; }
.tab-share { width: 93px; }
.tab-view { width: 47px; }
.i-collapse { width: 10px; height: 6px; margin-left: 655px; }
.help { width: 14px; height: 14px; flex: none; border-radius: 50%; background: #0f6fc9; color: #fff; font-weight: 700; line-height: 14px; text-align: center; margin-left: 10px; }
.ribbon { display: flex; height: 92px; background: #f5f6f7; border-bottom: 1px solid #dadbdc; color: #333; letter-spacing: -.3px; }
.group { position: relative; display: flex; flex-direction: column; justify-content: space-between; height: 91px; padding-bottom: 1px; }
.group::after { content: ""; position: absolute; right: 0; top: 3px; width: 1px; height: 86px; background: #dfe0e1; }
.g-label { text-align: center; color: #5a5a5a; letter-spacing: -.12px; margin-left: -6px; }
.g-clip .g-label { margin-left: 0; }
.g-org .g-label { margin-left: -18px; }
.tools { display: flex; }
.g-clip { width: 376px; padding-left: 3px; }
.g-org { width: 243px; padding-left: 9px; }
.g-new { width: 83px; padding-left: 5px; }
.g-open { width: 97px; padding-left: 3px; }
.g-sel { width: 150px; padding-left: 7px; }
.g-sel .g-label { margin-left: -8px; }
.big { display: flex; flex-direction: column; align-items: center; padding-top: 7px; line-height: 13px; text-align: center; }
.big > svg { width: 32px; height: 32px; }
.big > span { margin-top: 3px; }
.big-pin { width: 124px; } .big-copy { width: 64px; } .big-paste { width: 57px; }
.big-new { width: 41px; } .big-prop { width: 55px; }
.off { color: #8e8e8e; }
.small-col { display: flex; flex-direction: column; padding: 4px 0 0 1px; }
.g-new .small-col { padding-left: 3px; } .g-open .small-col { padding-left: 3px; } .g-sel .small-col { padding-left: 0; }
.small { display: flex; align-items: center; height: 22px; gap: 3px; }
.small svg { width: 16px; height: 16px; }
.small svg.caret, .big svg.caret { width: 6px; height: 4px; }
.big svg.caret { margin-top: 4px; }
.mid-col { padding-top: 8px; }
.mid-col .small { height: 29px; }
.mid-first .small { gap: 2px; }
.mid-first .caret, .mid-second .caret { margin-left: 2px; }
.mid-first { width: 112px; }
.mid-second { padding-left: 7px; position: relative; }
.mid-second::before { content: ""; position: absolute; left: 0; top: 9px; width: 1px; height: 55px; background: #dfe0e1; }
.address-row { display: flex; height: 35px; padding-top: 6px; }
.arrows { width: 106px; height: 22px; }
.address { width: 627px; height: 22px; border: 1px solid #d9d9d9; display: flex; align-items: center; padding-left: 3px; color: #111; }
.guill { width: 9px; height: 8px; margin: 0 8px 0 4px; }
.sep { width: 6px; height: 8px; margin-right: 9px; }
.c1 { width: 61px; } .c2 { width: 62px; } .c3 { width: 66px; } .c4 { width: 72px; } .c5 { width: 66px; } .c6 { width: 158px; }
.drop { width: 10px; height: 8px; margin-right: 4px; }
.refresh { width: 17px; height: 20px; border-left: 1px solid #d9d9d9; }
.search { width: 202px; height: 22px; margin-left: 11px; border: 1px solid #d9d9d9; padding: 0 8px; display: flex; align-items: center; justify-content: space-between; color: #6d6d6d; }
.search svg { width: 12px; height: 12px; }
.ex-body { display: flex; height: 314px; }
.tree { width: 181px; padding-top: 16px; color: #000; overflow: hidden; border-right: 1px solid #fff; }
.node { display: flex; align-items: center; height: 24px; gap: 5px; padding-left: 24px; }
.node svg { width: 16px; height: 16px; }
.node.top { margin-top: 8px; }
.node.sub { padding-left: 32px; }
.blue svg { color: #0873d0; --cut: #fff; }
.picked { background: #d9d9d9; width: 180px; }
.scroll { width: 16px; background: #f0f0f0; display: flex; flex-direction: column; }
.scroll svg { width: 16px; height: 17px; }
.scroll i { width: 15px; height: 231px; background: #cdcdcd; margin-bottom: auto; }
.files { width: 760px; margin-left: 2px; border-left: 1px solid #f2f2f2; }
.head { display: flex; height: 31px; padding-left: 12px; color: #4c607a; position: relative; }
.box { width: 13px; height: 13px; border: 1px solid #222; margin-top: 6px; }
.head span { height: 25px; line-height: 26px; border-right: 1px solid #e4e4e4; }
.h-name { width: 248px; padding-left: 10px; }
.sort { position: absolute; left: 139px; top: 0; width: 8px; height: 5px; }
.h-state { width: 80px; padding-left: 6px; } .h-date { width: 120px; padding-left: 6px; } .h-type { width: 120px; padding-left: 7px; } .h-size { width: 80px; padding-left: 6px; }
.row { display: flex; align-items: center; width: 654px; height: 21px; margin-left: 15px; padding-left: 20px; color: #6d6d6d; }
.chosen { background: #d9d9d9; padding-left: 4px; height: 22px; margin-bottom: -1px; }
.tick { width: 13px; height: 13px; margin-right: 3px; }
.fi { width: 14px; height: 18px; margin-right: 5px; }
.name { width: 224px; color: #000; }
.st { width: 12px; height: 12px; margin-right: 3px; }
.pr { width: 10px; height: 12px; }
.date { width: 121px; margin-left: 56px; } .type { width: 119px; } .size { width: 66px; text-align: right; }
.status { display: flex; align-items: center; height: 23px; padding-left: 14px; color: #1e395b; }
.status span { height: 16px; border-right: 1px solid #e6e6e6; margin-right: 10px; }
.s1 { width: 83px; } .s2 { width: 164px; } .s3 { width: 211px; }
.view-details { width: 22px; height: 23px; margin: 0 4px 0 auto; }
.view-icons { width: 14px; height: 11px; margin-right: 8px; }

.photos { display: flex; flex-direction: column; border: 1px solid #333; border-top-color: #191919; background: #222; color: #fff; }
.ph-title { display: flex; align-items: center; height: 31px; padding: 1px 18px 0 12px; background: #1f1f1f; }
.ph-title .controls { color: #7a7a7a; margin-bottom: 2px; }
.ph-bar { display: flex; height: 48px; align-items: center; }
.ph-bar svg { fill: none; stroke: #fff; stroke-width: 1.300; }
.all { display: flex; align-items: center; width: 138px; height: 48px; padding-left: 12px; gap: 8px; background: #424f78; }
.ph-bar .all svg { width: 16px; height: 16px; stroke: none; }
.add { display: flex; align-items: center; gap: 8px; width: 232px; padding-left: 12px; }
.add svg { width: 16px; height: 16px; }
.edit-tools { display: flex; gap: 32.200px; }
.edit-tools svg { width: 18px; height: 18px; }
.edit-tools svg + svg { position: relative; left: -.6px; }
.ph-bar .dim { stroke: #858585; }
.right-tools { display: flex; align-items: center; margin-left: auto; padding-right: 16px; }
.r-edit { width: 20px; height: 20px; }
.r-down { width: 8px; height: 6px; margin: 0 40px 0 8px; }
.ph-bar .r-down { stroke: #53649e; }
.r-share { width: 20px; height: 18px; }
.r-print { width: 20px; height: 20px; margin: 0 40px 0 48px; }
.r-more { width: 16px; height: 4px; }
.ph-bar .r-more { stroke-width: 2; }
.stage { display: flex; align-items: flex-end; justify-content: space-between; height: 439px; padding: 0 26px 22px 188px; }
.plot { width: 582px; height: 407px; align-self: flex-start; background: #fff; font-family: "DejaVu Sans", sans-serif; letter-spacing: 0; }
.expand { width: 19px; height: 19px; }
.plot .tick-text { font-size: 7.900px; }
.plot .plot-title { font-size: 9.600px; }
.plot .mid { text-anchor: middle; }
.plot .end { text-anchor: end; }
.frame { fill: none; stroke: #222; stroke-width: .8; }
.ticks { stroke: #222; stroke-width: .8; }
.bars { fill: #00f; }
.normal { fill: none; stroke: #ffa500; stroke-width: 1.300; }
.steps { fill: none; stroke: #00f; stroke-width: 1.200; }
.smooth { fill: none; stroke: #008000; stroke-width: 1.300; }
.legend { fill: #fff; fill-opacity: .8; stroke: #ccc; stroke-width: .8; }

.taskbar { grid-column: 1 / 3; display: flex; color: #fff; background: linear-gradient(90deg, #34425f 0, #35425f 7%, #49475a 25%, #3b405a 31%, #24315a 38%, #1d2b51 46%, #2c3454 54%, #45435a 64%, #404655 73%, #3e4855 84%, #333d54 90%, #1d2a54 96%, #1d2950 100%); border-top: 1px solid #3a3b3d; }
.sys { width: 48px; display: flex; align-items: center; justify-content: center; padding-bottom: 1px; }
.alice { width: 342px; background: #ccc; color: #222; font-size: 15px; letter-spacing: -.1px; display: flex; align-items: center; justify-content: space-between; padding: 0 16px 4px 14px; }
.alice svg { width: 15px; height: 22px; }
.apps { display: flex; padding-left: 12px; gap: 9.080px; }
.app { position: relative; width: 40px; display: flex; align-items: center; justify-content: center; padding-bottom: 1px; }
.app svg { width: 24px; height: 23px; }
.run::after { content: ""; position: absolute; left: 0; bottom: 0; width: 40px; height: 2px; background: #7685b8; }
.stacked::after { background: linear-gradient(90deg, #7685b8 31px, #424765 31px, #424765 32px, #596487 32px); }
.logo-letter { font: 700 11px "Open Sans", sans-serif; fill: #fff; text-anchor: middle; }
.ij { font: 700 8px "Liberation Mono", monospace; fill: #fff; text-anchor: middle; }
.tray { display: flex; align-items: center; margin-left: auto; padding-bottom: 2px; --cut: #3d4656; }
.t-people { width: 16px; height: 16px; margin-right: 21px; }
.t-up { width: 12px; height: 8px; margin-right: 10px; }
.t-cloud { width: 17px; height: 12px; margin-right: 7px; }
.t-net { width: 16px; height: 14px; margin-right: 8px; }
.t-vol { width: 17px; height: 14px; margin-right: 11px; }
.t-pen { width: 16px; height: 16px; margin-right: 14px; }
.lang { width: 36px; }
.clock { width: 54px; text-align: center; line-height: 18px; margin-right: 18px; letter-spacing: -.3px; }
.t-note { width: 17px; height: 17px; margin-right: 19px; }
.peek { width: 1px; height: 36px; background: #7d86a0; margin-right: 4px; }
```
FILE: charts.js
```js
// Plot geometry in the 582 x 407 figure. Horizontal sample coordinates are
// stored on a finer raster: X() and Y() bring them to figure units.
const X = v => v / 2.6133 - 9.2;
const Y = v => v / 3;

const samples = {
  sample_1: {
    mean: 790, sigma: 101, unit: 12.7, yMax: 30,
    edges: [565, 617, 667, 719, 771, 823, 874, 924, 975, 1027],
    counts: [4, 11, 13, 21, 32, 13, 15, 9, 4],
    first: 8.08, tick0: 296, step: 149.1, n: 8, right: true,
    cdf: '565,1067 572,1063 590,1058 620,1053 632,1045 640,1038 640,1033 647,1025 660,1022 678,1018 684,1010 698,1008 700,998 714,993 714,980 722,972 735,968 737,955 742,948 758,940 758,925 766,922 766,912 773,910 773,893 781,890 781,870 788,867 788,853 796,850 796,840 804,836 804,829 811,828 811,815 833,806 840,798 842,785 850,777 870,770 877,765 878,758 885,757 885,748 893,745 900,742 907,738 908,732 915,731 915,724 922,722 929,720 930,711 960,707 968,704 975,695 990,689 1020,685 1050,680'
  },
  sample_3: {
    mean: 806, sigma: 103.5, unit: 14.03, yMax: 30,
    edges: [541, 594, 648, 702, 756, 811, 865, 920, 972, 1027, 1080],
    counts: [2, 6, 13, 20, 24, 29, 24, 6, 5, 2],
    first: 2.78, tick0: 291, step: 156.5, n: 8,
    cdf: '541,1067 560,1064 602,1060 603,1052 640,1047 663,1044 665,1036 673,1035 673,1029 681,1028 681,1020 689,1018 689,1010 705,1002 713,990 729,983 729,970 737,968 737,960 745,958 745,950 756,946 760,940 782,931 783,924 790,922 790,912 798,910 798,895 806,893 806,878 822,871 822,850 830,847 830,830 838,828 838,812 846,808 846,805 860,800 861,790 870,787 870,780 877,778 877,771 885,769 885,757 893,755 893,742 902,735 909,733 909,724 917,722 917,718 932,714 932,710 955,706 980,699 1018,691 1018,687 1080,683 1082,679'
  },
  sample_2: {
    mean: 812, sigma: 91.8, unit: 17.7, yMax: 20,
    edges: [651, 687, 724, 760, 797, 834, 870, 907, 943],
    counts: [11, 12, 15, 9, 7, 17, 11, 23],
    first: 5.92, tick0: 336, step: 196, n: 6,
    cdf: '649,1067 651,1063 660,1060 661,1050 669,1045 670,1036 678,1033 688,1026 689,1015 699,1010 699,1003 710,998 718,992 719,985 729,981 729,958 739,955 739,947 757,942 758,929 780,926 796,918 797,895 817,892 817,886 826,882 826,870 836,868 836,857 846,854 846,836 856,833 856,822 866,820 866,808 876,804 885,796 885,787 895,784 895,777 905,775 905,766 914,764 914,740 924,737 924,722 934,719 934,700 943,697 944,682'
  }
};

const NORMAL = 'Функция нормального распределения';
const HIST = 'Функция распределения';
const CUMULATIVE = 'Кумулятивная функция распределения';
const CUMULATIVE_NORMAL = 'Кумулятивная функция нормального распределения';

function erf(x) {
  const t = 1 / (1 + 0.3275911 * Math.abs(x));
  const y = 1 - (((((1.061405429 * t - 1.453152027) * t) + 1.421413741) * t - 0.284496736) * t + 0.254829592) * t * Math.exp(-x * x);
  return x < 0 ? -y : y;
}

function curve(f) {
  let d = '';
  for (let x = 268; x <= 1340; x += 4) d += (d ? 'L' : 'M') + X(x).toFixed(2) + ' ' + Y(f(x)).toFixed(2);
  return d;
}

function text(cls, x, y, s, len) {
  return `<text class="${cls}" x="${x}" y="${y}"${len ? ` textLength="${len}" lengthAdjust="spacingAndGlyphs"` : ''}>${s}</text>`;
}

function legend(x, right, y, rows) {
  let s = `<rect class="legend" rx="1.500" x="${X(x)}" y="${Y(y)}" width="${X(right) - X(x)}" height="26.500"/>`;
  rows.forEach(([cls, label, len], i) => {
    const cy = Y(y) + 6.4 + i * 12.1;
    s += cls === 'bars'
      ? `<rect class="bars" x="${X(x + 8)}" y="${cy - 2.8}" width="15.700" height="5.500"/>`
      : `<path class="${cls}" d="M${X(x + 7)} ${cy}H${X(x + 51)}"/>`;
    s += text('tick-text', X(x + 67), cy + 2.6, label, len);
  });
  return s;
}

function steps(list) {
  const p = list.split(' ').map(q => q.split(',').map(Number));
  let d = `M${X(p[0][0])} ${Y(p[0][1])}`;
  for (let i = 1; i < p.length; i++) {
    const [x, y] = p[i];
    d += x - p[i - 1][0] > 11 ? `L${X(x)} ${Y(y)}` : `H${X(x)}V${Y(y)}`;
  }
  return d;
}

function draw(s) {
  let out = '<g class="bars" shape-rendering="crispEdges">';
  s.counts.forEach((c, i) => {
    const h = c * s.unit / 3;
    out += `<rect x="${X(s.edges[i])}" y="${191.3 - h}" width="${X(s.edges[i + 1]) - X(s.edges[i])}" height="${h}"/>`;
  });
  out += '</g>';
  out += `<path class="normal" d="${curve(x => 573.5 - 405.5 * Math.exp(-((x - s.mean) ** 2) / (2 * s.sigma ** 2)))}"/>`;
  out += `<path class="steps" d="${steps(s.cdf)}"/>`;
  out += `<path class="smooth" d="${curve(x => 1067 - 388 * 0.5 * (1 + erf((x - s.mean) / s.sigma / Math.SQRT2)))}"/>`;
  out += '<rect class="frame" x="73.400" y="49.500" width="450" height="142"/><rect class="frame" x="73.400" y="220.400" width="450" height="142"/>';
  let t = '';
  for (let i = 0; i < s.n; i++) {
    const x = X(s.tick0 + i * s.step), label = (s.first + i * 0.02).toFixed(2);
    t += `M${x} 191.500v2.800M${x} 362.400v2.800`;
    out += text('tick-text mid', x + .3, 203.5, label) + text('tick-text mid', x + .3, 374.3, label);
  }
  for (let v = 0; v <= s.yMax; v += 5) {
    const y = 191.3 - v * s.unit / 3;
    t += `M73.200 ${y}h-2.800`;
    out += text('tick-text end', 67.3, y + 2.9, v);
  }
  for (let i = 0; i <= 5; i++) {
    const y = 355.8 - i * 25.9;
    t += `M73.200 ${y}h-2.800`;
    out += text('tick-text end', 67.3, y + 2.9, (i / 5).toFixed(1));
  }
  out += `<path class="ticks" d="${t}"/>`;
  out += text('plot-title mid', 298.3, 44.5, HIST, 127) + text('plot-title mid', 298.5, 215.6, CUMULATIVE, 203.5);
  const top = [['normal', NORMAL, 165], ['bars', HIST, 106]];
  const low = [['steps', CUMULATIVE, 170], ['smooth', CUMULATIVE_NORMAL, 229]];
  out += s.right ? legend(874, 1381, 159.5, top) + legend(706, 1381, 994, low)
    : legend(226, 733, 159.5, top) + legend(226, 901, 673, low);
  return out;
}

document.querySelectorAll('.photos').forEach(el => {
  const name = el.dataset.sample;
  el.append(document.getElementById('photos-window').content.cloneNode(true));
  el.querySelector('.ph-title span').textContent = `Фотографии — ${name}.png`;
  el.querySelector('.plot').innerHTML = draw(samples[name]);
});
```
